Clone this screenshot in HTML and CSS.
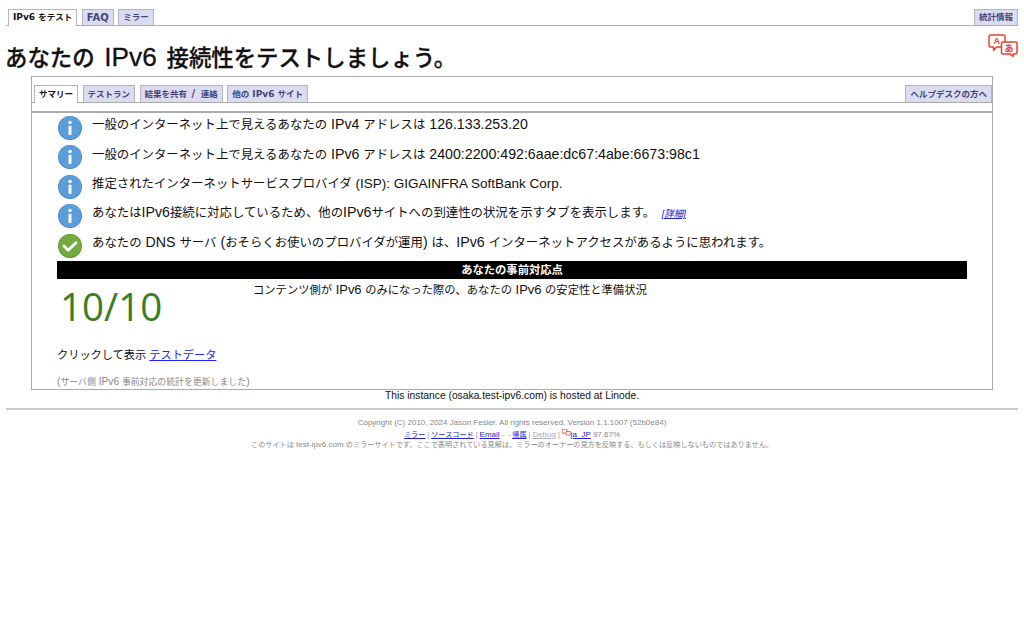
FILE: index.html
```html
<!DOCTYPE html>
<html lang="ja">
<head>
<meta charset="utf-8">
<title>IPv6 接続性テスト</title>
<link rel="stylesheet" href="styles.css">
</head>
<body>
<nav class="tabs top-tabs">
  <a class="tab active"><span class="l">IPv6 </span>をテスト</a>
  <a class="tab"><span class="wide">FAQ</span></a>
  <a class="tab">ミラー</a>
  <a class="tab tab-right">統計情報</a>
</nav>
<div class="title-row">
  <h1>あなたの<span class="l"> IPv6 </span>接続性をテストしましょう。</h1>
  <svg class="translate" viewBox="0 0 30 23" width="30" height="23" fill="#fff" stroke="#e8432e" stroke-width="1.5" stroke-linejoin="round">
    <path d="M2.5 1h13a1.5 1.5 0 0 1 1.5 1.5v9a1.5 1.5 0 0 1-1.5 1.5h-7l-3 3.5v-3.5h-3a1.5 1.5 0 0 1-1.5-1.5v-9a1.5 1.5 0 0 1 1.5-1.5z"/>
    <path d="M15 8h12.5a1.5 1.5 0 0 1 1.5 1.5v9a1.5 1.5 0 0 1-1.5 1.5h-2.5v2.5l-3-2.500h-7a1.5 1.5 0 0 1-1.5-1.5v-9a1.5 1.5 0 0 1 1.5-1.5z"/>
    <text x="5.5" y="10" class="tr-a">A</text>
    <text x="16.5" y="17.5" class="tr-b">あ</text>
  </svg>
</div>
<main class="panel">
  <nav class="tabs inner-tabs">
    <a class="tab active">サマリー</a>
    <a class="tab">テストラン</a>
    <a class="tab">結果を共有<span class="wide sep"> / </span>連絡</a>
    <a class="tab">他の<span class="l"> IPv6 </span>サイト</a>
    <a class="tab tab-right">ヘルプデスクの方へ</a>
  </nav>
  <div class="spacer"></div>
  <section class="content">
    <div class="row"><svg class="icon" viewBox="0 0 26 26"><use href="#info"/></svg><p>一般のインターネット上で見えるあなたの<span class="l"> IPv4 </span>アドレスは<span class="l"> 126.133.253.20</span></p></div>
    <div class="row"><svg class="icon" viewBox="0 0 26 26"><use href="#info"/></svg><p>一般のインターネット上で見えるあなたの<span class="l"> IPv6 </span>アドレスは<span class="l"> 2400:2200:492:6aae:dc67:4abe:6673:98c1</span></p></div>
    <div class="row"><svg class="icon" viewBox="0 0 26 26"><use href="#info"/></svg><p>推定されたインターネットサービスプロバイダ<span class="l isp"> (ISP): GIGAINFRA SoftBank Corp.</span></p></div>
    <div class="row"><svg class="icon" viewBox="0 0 26 26"><use href="#info"/></svg><p>あなたは<span class="l">IPv6</span>接続に対応しているため、他の<span class="l">IPv6</span>サイトへの到達性の状況を示すタブを表示します。 <a class="detail" href="#">[詳細]</a></p></div>
    <div class="row"><svg class="icon" viewBox="0 0 26 26"><circle cx="13" cy="13" r="13" fill="#5d8f33"/><circle cx="13" cy="12.5" r="12.5" fill="#74ab40"/><path d="M6.5 13l4.5 4.5 8.5-8" fill="none" stroke="#fff" stroke-width="3" stroke-linecap="round" stroke-linejoin="round"/></svg><p>あなたの<span class="l"> DNS </span>サーバ<span class="l"> (</span>おそらくお使いのプロバイダが運用<span class="l">) </span>は、<span class="l">IPv6 </span>インターネットアクセスがあるように思われます。</p></div>
    <h2 class="score-bar">あなたの事前対応点</h2>
    <div class="score-row">
      <div class="score">10/10</div>
      <div class="score-text">コンテンツ側が<span class="l"> IPv6 </span>のみになった際の、あなたの<span class="l"> IPv6 </span>の安定性と準備状況</div>
    </div>
    <p class="click">クリックして表示 <a href="#">テストデータ</a></p>
    <p class="updated"><span class="l">(</span>サーバ側<span class="l"> IPv6 </span>事前対応の統計を更新しました<span class="l">)</span></p>
  </section>
</main>
<p class="instance">This instance (osaka.test-ipv6.com) is hosted at Linode.</p>
<footer>
  <div><span class="l">Copyright (C) 2010, 2024 Jason Fesler. All rights reserved. Version 1.1.1007 (52b0e84)</span></div>
  <div><a href="#">ミラー</a> | <a href="#">ソースコード</a> | <a href="#"><span class="l">Email</span></a> -&nbsp; - <a href="#">帰属</a> | <a class="debug" href="#"><span class="l">Debug</span></a> | <svg class="mini" viewBox="0 0 30 23" width="9" height="7" fill="#fff" stroke="#e8432e" stroke-width="2.5"><path d="M1 1h16v12h-8l-3 3.5v-3.5h-5z"/><path d="M13.5 8h15.5v12h-4v2.5l-3-2.5h-8.5z"/></svg><a href="#"><span class="l">ja_JP</span></a><span class="l"> 97.67%</span></div>
  <div>このサイトは<span class="l"> test-ipv6.com </span>のミラーサイトです。ここで表明されている見解は、ミラーのオーナーの見方を反映する、もしくは反映しないものではありません。</div>
</footer>
<svg class="defs" width="0" height="0">
  <defs>
    <g id="info">
      <circle cx="13" cy="13" r="13" fill="#4a84bc"/>
      <circle cx="13" cy="12.5" r="12.5" fill="#5b9cdb"/>
      <circle cx="13" cy="7" r="1.9" fill="#fff"/>
      <rect x="11.4" y="10.5" width="3.2" height="10" rx="0.8" fill="#fff"/>
    </g>
  </defs>
</svg>
</body>
</html>
```

FILE: styles.css
```css
html, body { margin: 0; padding: 0; background: #fff; }
body {
  font-family: "Liberation Sans", "Noto Sans CJK JP", sans-serif;
  color: #111;
  padding: 0 6px;
}
.l { font-size: 1.145em; }
.isp { font-size: 1.09em; }
.tabs {
  display: flex;
  align-items: flex-end;
  gap: 4.5px;
  border-bottom: 1px solid #aaa;
}
.top-tabs { padding: 9px 0 0 2px; height: 16px; box-sizing: content-box; }
.tab {
  box-sizing: border-box;
  height: 16px;
  padding: 0 4px;
  display: block;
  font: bold 8.5px/15px "DejaVu Sans", "Noto Sans CJK JP", sans-serif;
  color: #44447a;
  background: #dcdcf0;
  border: 1px solid #b4b4c4;
  border-bottom: 0;
}
.tab .l { font-size: 9px; }
.tab .wide { font-size: 10px; }
.tab .sep { letter-spacing: 1px; }
.tab.active { background: #fff; color: #111; height: 17px; margin-bottom: -1px; }
.tab-right { margin-left: auto; }
.title-row { position: relative; }
h1 {
  margin: 0 0 0 -1px;
  padding-top: 18px;
  font: 500 22.4px/27px "Liberation Sans", "Noto Sans CJK JP", sans-serif;
  -webkit-text-stroke: 0.3px #111;
  color: #111;
  height: 50px;
  box-sizing: border-box;
}
h1 .l { font-size: 1.17em; word-spacing: 2.5px; }
.translate { position: absolute; right: 0; top: 8px; }
.tr-a { font: bold 9px "Liberation Sans", sans-serif; fill: #e8432e; stroke: none; }
.tr-b { font: bold 9px "Noto Sans CJK JP", sans-serif; fill: #e8432e; stroke: none; }
.panel {
  margin: 0 25px;
  height: 314px;
  box-sizing: border-box;
  border: 1px solid #aaa;
  overflow: hidden;
}
.inner-tabs { padding: 8px 0 0 2px; height: 17px; box-sizing: content-box; }
.inner-tabs .tab { height: 17px; line-height: 16px; }
.inner-tabs .tab.active { height: 18px; }
.spacer { height: 8px; border-bottom: 2px solid #aaa; }
.content { padding: 0 25px; }
.row {
  display: flex;
  align-items: center;
  gap: 10px;
  height: 29.5px;
  padding-left: 1px;
}
.row p { margin: 0 0 6px; font-size: 12.4px; line-height: 16px; }
.icon { width: 24px; height: 24px; flex: none; }
.detail { font-size: 9.5px; font-style: italic; margin-left: 3px; color: #22c; }
.score-bar {
  margin: 0;
  height: 18px;
  background: #000;
  color: #fff;
  text-align: center;
  font: bold 11.3px/18px "Liberation Sans", "Noto Sans CJK JP", sans-serif;
}
.score-row { display: flex; height: 61px; }
.score {
  width: 196px;
  padding: 4px 0 0 3px;
  box-sizing: border-box;
  font: 38.5px/46px "Open Sans", sans-serif;
  color: #3a7d22;
}
.score-text { font-size: 11.3px; line-height: 16px; padding-top: 3px; }
.click { margin: 0; font-size: 11.2px; line-height: 16px; height: 22px; padding-top: 7px; }
.click a { color: #22f; }
.updated { margin: 0; padding-top: 7px; font-size: 8.9px; line-height: 12px; color: #888; }
.instance { margin: 0; text-align: center; font-size: 10.3px; line-height: 12px; }
footer {
  margin-top: 6px;
  border-top: 2px solid #ccc;
  padding-top: 8px;
  text-align: center;
  font-size: 7.15px;
  line-height: 10.5px;
  color: #888;
}
footer .l { font-size: 8px; }
footer a { color: #22c; }
footer a.debug { color: #aab; }
.mini { vertical-align: 1px; }
.defs { position: absolute; }
```
